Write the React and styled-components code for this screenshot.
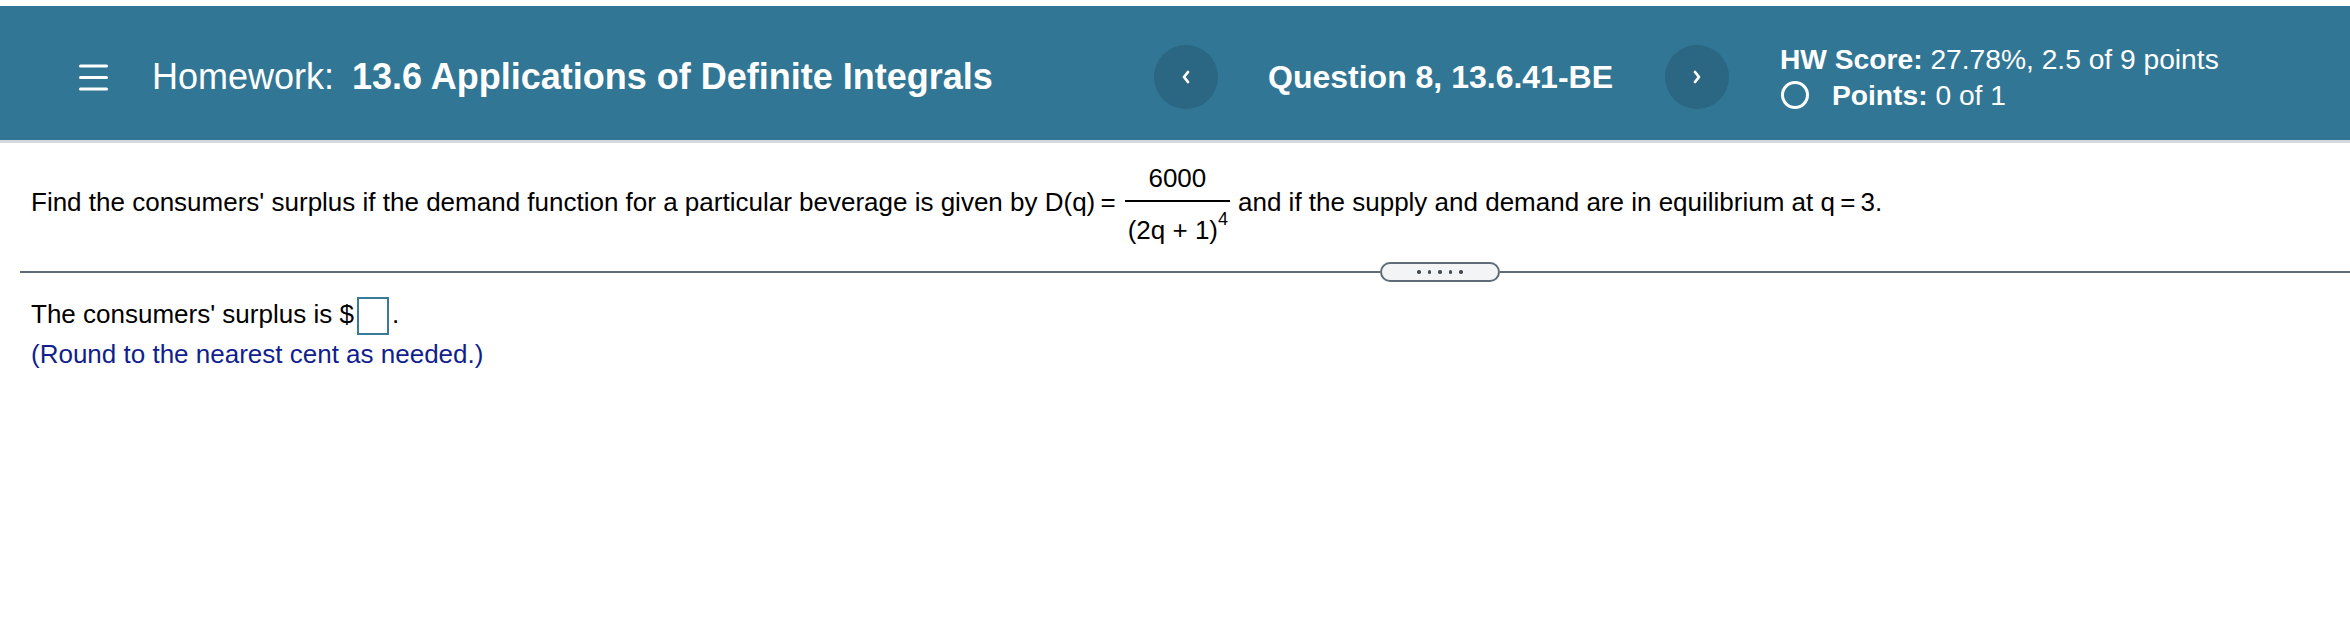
import React from "react";
import styled, { createGlobalStyle } from "styled-components";

const GlobalStyle = createGlobalStyle`
  body {
    margin: 0;
    background: #ffffff;
    font-family: "Liberation Sans", Arial, Helvetica, sans-serif;
    color: #000000;
  }
`;

// top bar
const Header = styled.header`
  margin-top: 6px;
  height: 137px;
  box-sizing: border-box;
  padding: 8px 0 0 79px;
  background: #317795;
  border-bottom: 3px solid #d3d8de;
  display: flex;
  align-items: center;
  color: #ffffff;
`;

const LeftGroup = styled.div`
  flex: none;
  width: 1075px;
  display: flex;
  align-items: center;
`;

const MenuIcon = styled.svg`
  flex: none;
  display: block;
`;

const Title = styled.h1`
  margin: 0 0 0 44px;
  font-size: 36px;
  font-weight: 400;
  white-space: nowrap;
`;

const TitleStrong = styled.strong`
  margin-left: 18px;
  font-weight: 700;
`;

const NavButton = styled.button`
  flex: none;
  width: 64px;
  height: 64px;
  border: none;
  border-radius: 50%;
  padding: 0;
  background: #2b6683;
  display: flex;
  align-items: center;
  justify-content: center;
  cursor: pointer;
`;

const QuestionTitle = styled.div`
  margin: 0 52px 0 50px;
  font-size: 32px;
  font-weight: 700;
  white-space: nowrap;
`;

const Score = styled.div`
  margin-left: 51px;
  display: flex;
  flex-direction: column;
  font-size: 28.2px;
  line-height: 36px;
  white-space: nowrap;
`;

const PointsRow = styled.div`
  display: flex;
  align-items: center;
  gap: 22px;
`;

// question area
const Body = styled.main`
  padding-left: 20px;
`;

const Question = styled.p`
  margin: 21px 0 0;
  padding-left: 11px;
  font-size: 26px;
  white-space: nowrap;
`;

// flex baseline = numerator baseline
const Fraction = styled.span`
  display: inline-flex;
  flex-direction: column;
  align-items: stretch;
  vertical-align: 24px;
  margin: 0 8px 0 9px;
  text-align: center;
`;

const Numerator = styled.span`
  line-height: 28px;
  margin-bottom: 8px;
`;

const FracBar = styled.span`
  height: 2px;
  background: #000000;
`;

const Denominator = styled.span`
  line-height: 28px;
  padding: 14px 2px 0 3px;
`;

const Sup = styled.sup`
  font-size: 18px;
  line-height: 0;
  vertical-align: 14px;
`;

const RuleRow = styled.div`
  margin-top: 18px;
  height: 20px;
  display: grid;
  grid-template-columns: 1360px 120px 1fr;
  align-items: center;
`;

const RuleLine = styled.div`
  height: 2px;
  background: #5f6b77;
`;

const Handle = styled.div`
  height: 20px;
  box-sizing: border-box;
  border: 2px solid #5f6b77;
  border-radius: 10px;
  background: #f3f4f6;
  display: flex;
  align-items: center;
  justify-content: center;
  gap: 7px;
`;

const Dot = styled.span`
  width: 3.5px;
  height: 3.5px;
  border-radius: 50%;
  background: #3f4a55;
`;

const Answer = styled.div`
  margin-top: 13px;
  padding-left: 11px;
  font-size: 26px;
  line-height: 39px;
`;

const AnswerBox = styled.span`
  display: inline-block;
  width: 28px;
  height: 34px;
  border: 2px solid #3a7b98;
  vertical-align: middle;
  margin: 0 3px 0 3px;
`;

const Hint = styled.div`
  color: #111f8c;
`;

const Chevron = ({ dir }) => (
  <svg width="10" height="16" viewBox="0 0 10 16">
    <polyline
      points={dir === "left" ? "7,3 3,8 7,13" : "3,3 7,8 3,13"}
      fill="none"
      stroke="#ffffff"
      strokeWidth="2.8"
      strokeLinecap="round"
      strokeLinejoin="round"
    />
  </svg>
);

export default function App() {
  return (
    <>
      <GlobalStyle />
      <Header>
        <LeftGroup>
          <MenuIcon width="29" height="27" viewBox="0 0 29 27">
            <g stroke="#ffffff" strokeWidth="3" strokeLinecap="round">
              <line x1="1.5" y1="2" x2="27.5" y2="2" />
              <line x1="1.5" y1="13.5" x2="27.5" y2="13.5" />
              <line x1="1.5" y1="25" x2="27.5" y2="25" />
            </g>
          </MenuIcon>
          <Title>
            Homework:<TitleStrong>13.6 Applications of Definite Integrals</TitleStrong>
          </Title>
        </LeftGroup>
        <NavButton aria-label="Previous question">
          <Chevron dir="left" />
        </NavButton>
        <QuestionTitle>Question 8, 13.6.41-BE</QuestionTitle>
        <NavButton aria-label="Next question">
          <Chevron dir="right" />
        </NavButton>
        <Score>
          <div>
            <b>HW Score:</b> 27.78%, 2.5 of 9 points
          </div>
          <PointsRow>
            <svg width="30" height="30" viewBox="0 0 30 30">
              <circle cx="15" cy="15" r="12.5" fill="none" stroke="#ffffff" strokeWidth="3" />
            </svg>
            <span>
              <b>Points:</b> 0 of 1
            </span>
          </PointsRow>
        </Score>
      </Header>

      <Body>
        <Question>
          Find the consumers' surplus if the demand function for a particular beverage is given by D(q)&#8201;=
          <Fraction>
            <Numerator>6000</Numerator>
            <FracBar />
            <Denominator>
              (2q + 1)<Sup>4</Sup>
            </Denominator>
          </Fraction>
          and if the supply and demand are in equilibrium at q&#8201;=&#8201;3.
        </Question>

        <RuleRow>
          <RuleLine />
          <Handle>
            <Dot />
            <Dot />
            <Dot />
            <Dot />
            <Dot />
          </Handle>
          <RuleLine />
        </RuleRow>

        <Answer>
          <div>
            The consumers' surplus is $<AnswerBox />.
          </div>
          <Hint>(Round to the nearest cent as needed.)</Hint>
        </Answer>
      </Body>
    </>
  );
}
